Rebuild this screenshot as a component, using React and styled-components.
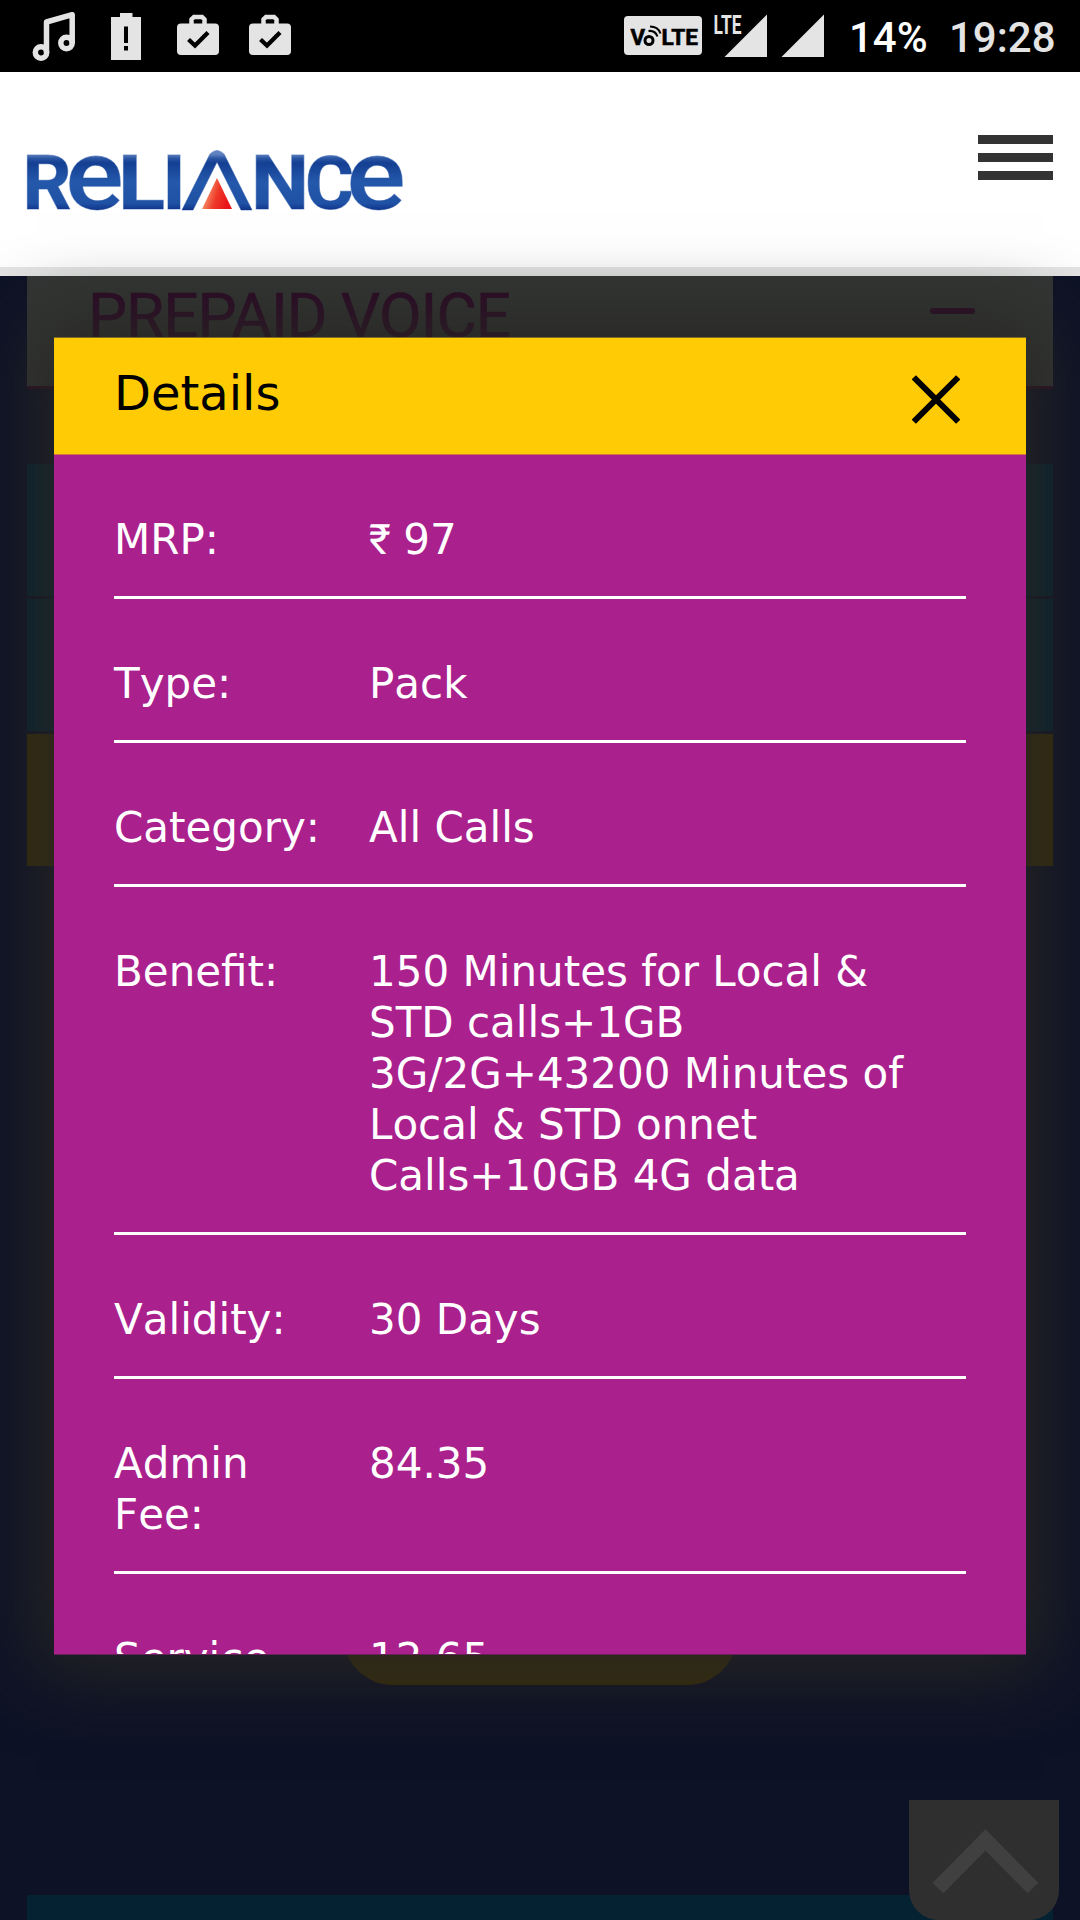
import styled, { createGlobalStyle } from "styled-components";

const details = [
  { label: "MRP:", value: "97", currency: "₹" },
  { label: "Type:", value: "Pack" },
  { label: "Category:", value: "All Calls" },
  {
    label: "Benefit:",
    value:
      "150 Minutes for Local &\nSTD calls+1GB\n3G/2G+43200 Minutes of\nLocal & STD onnet\nCalls+10GB 4G data",
  },
  { label: "Validity:", value: "30 Days" },
  { label: "Admin Fee:", value: "84.35" },
  { label: "Service Tax:", value: "12.65" },
];

const BagIcon = () => (
  <svg width="42" height="42" viewBox="0 0 42 42">
    <path
      d="M14.500 10V5.500L17 3h8l2.500 2.500V10"
      fill="none"
      stroke="#e4e4e4"
      strokeWidth="4.500"
    />
    <rect y="9.500" width="42" height="31.500" rx="4" fill="#e4e4e4" />
    <path
      d="M11.500 25.500l6.500 6 13-13"
      fill="none"
      stroke="#000"
      strokeWidth="4.300"
    />
  </svg>
);

const NotificationIcons = () => (
  <IconRow>
    <svg width="44" height="50" viewBox="0 0 44 50">
      <g fill="none" stroke="#e4e4e4" strokeWidth="5.500" strokeLinejoin="round">
        <circle cx="9" cy="40.500" r="5.700" />
        <circle cx="34.500" cy="31" r="5.700" />
        <path d="M14.500 41V10L40.200 2.700v28.500" />
      </g>
    </svg>
    <svg width="30" height="48" viewBox="0 0 30 48">
      <path d="M9 1h12.500v4H30v43H0V5h9z" fill="#e4e4e4" />
      <path d="M13 14.500h4V31h-4zM13 34h4v4.500h-4z" fill="#000" />
    </svg>
    <BagIcon />
    <BagIcon />
  </IconRow>
);

const SignalIcons = () => (
  <svg width="202" height="46" viewBox="0 0 202 46">
    <rect y="4" width="78" height="39" rx="4" fill="#e4e4e4" />
    <g
      fontFamily="Roboto, sans-serif"
      fontWeight="700"
      fontSize="22.500"
      fill="#000"
      stroke="#000"
      strokeWidth="0.6"
    >
      <text x="6.500" y="33" textLength="14.500" lengthAdjust="spacingAndGlyphs">
        V
      </text>
      <text x="37.500" y="33" textLength="36.500" lengthAdjust="spacingAndGlyphs">
        LTE
      </text>
    </g>
    <g fill="none" stroke="#000">
      <circle cx="25" cy="28.500" r="4" strokeWidth="3" />
      <path
        d="M26 14.500c5 0 9 2.500 10.500 7M24.500 19c4.500-.5 7.500 1.500 9 5.500"
        strokeWidth="2.100"
      />
    </g>
    <path d="M100.500 45H143V2.500z" fill="#e4e4e4" />
    <text
      x="89.500"
      y="21.800"
      textLength="28"
      lengthAdjust="spacingAndGlyphs"
      fontFamily="Roboto, sans-serif"
      fontWeight="700"
      fontSize="26"
      fill="#e4e4e4"
      stroke="#000"
      strokeWidth="1.500"
      paintOrder="stroke"
    >
      LTE
    </text>
    <path d="M157.500 45H200V2.500z" fill="#e4e4e4" />
  </svg>
);

const logoLetters = [
  { char: "R", x: -4.5, width: 49, size: 76, weight: 700 },
  { char: "e", x: 38.5, width: 58, size: 98, weight: 500 },
  { char: "L", x: 91, width: 47, size: 76, weight: 700 },
  { char: "I", x: 135, width: 24, size: 76, weight: 700 },
  { char: "N", x: 224, width: 58, size: 76, weight: 700 },
  { char: "C", x: 278, width: 49, size: 75, weight: 700 },
  { char: "e", x: 319.5, width: 59, size: 98, weight: 500 },
];

const Logo = () => (
  <LogoSvg width="375" height="60" viewBox="0 0 375 60">
    <defs>
      <linearGradient id="blue" x1="0" y1="4" x2="0" y2="60" gradientUnits="userSpaceOnUse">
        <stop offset="0" stopColor="#6182c0" />
        <stop offset="0.08" stopColor="#2a55a3" />
        <stop offset="0.16" stopColor="#143f93" />
        <stop offset="0.5" stopColor="#2458aa" />
        <stop offset="0.88" stopColor="#1f51a5" />
        <stop offset="1" stopColor="#0f348a" />
      </linearGradient>
      <linearGradient id="red" x1="0" y1="0" x2="1" y2="0.3">
        <stop offset="0.2" stopColor="#f79a72" />
        <stop offset="0.6" stopColor="#ee3a28" />
        <stop offset="1" stopColor="#e8131b" />
      </linearGradient>
    </defs>
    <g
      fill="url(#blue)"
      stroke="#8ea6d4"
      strokeWidth="1"
      paintOrder="stroke"
      fontFamily="Roboto, sans-serif"
    >
      {logoLetters.map(({ char, x, width, size, weight }) => (
        <text
          key={x}
          x={x}
          y="59"
          fontSize={size}
          fontWeight={weight}
          textLength={width}
          lengthAdjust="spacingAndGlyphs"
        >
          {char}
        </text>
      ))}
      <path d="M155 60L183 4Q190 -3 197 4L225 60H214L190 12L166 60z" />
    </g>
    <path d="M190 28L205 59H175z" fill="url(#red)" />
  </LogoSvg>
);

const App = () => {
  return (
    <>
      <GlobalStyle />
      <Screen>
        <StatusBar>
          <NotificationIcons />
          <SystemInfo>
            <SignalIcons />
            <Battery>14%</Battery>
            <Clock>19:28</Clock>
          </SystemInfo>
        </StatusBar>
        <Header>
          <Logo />
          <MenuButton>
            <span />
            <span />
            <span />
          </MenuButton>
        </Header>
        <Page>
          <AccordionHeader>
            <h2>PREPAID VOICE</h2>
            <Dash />
          </AccordionHeader>
          <PlanList>
            <PlanRow />
            <PlanRow />
            <PlanRow $active />
          </PlanList>
          <MoreButton />
          <NextSection />
        </Page>
        <ScrollTop>
          <svg width="150" height="120" viewBox="0 0 150 120">
            <path
              d="M29 88L76.500 40L124 88"
              fill="none"
              stroke="#404040"
              strokeWidth="15"
            />
          </svg>
        </ScrollTop>
        <Modal>
          <ModalHeader>
            <h3>Details</h3>
            <svg width="48" height="49" viewBox="0 0 48 49">
              <path
                d="M1.800 2.300l44.400 44.400M46.200 2.300l-44.400 44.400"
                stroke="#000"
                strokeWidth="6"
              />
            </svg>
          </ModalHeader>
          <ModalBody>
            {details.map(({ label, value, currency }) => (
              <DetailRow key={label}>
                <Label>{label}</Label>
                <Value>
                  {currency ? <Currency>{currency}</Currency> : null}
                  {currency ? " " : null}
                  {value}
                </Value>
              </DetailRow>
            ))}
          </ModalBody>
        </Modal>
      </Screen>
    </>
  );
};

const GlobalStyle = createGlobalStyle`
  * {
    box-sizing: border-box;
  }
  body {
    margin: 0;
    background: #0e1226;
  }
  svg {
    display: block;
    flex-shrink: 0;
  }
  h2, h3 {
    margin: 0;
    font-weight: 400;
  }
`;

const Screen = styled.div`
  position: relative;
  display: flex;
  flex-direction: column;
  width: 1080px;
  height: 1920px;
  overflow: hidden;
`;
const StatusBar = styled.div`
  display: flex;
  justify-content: space-between;
  height: 72px;
  padding: 12px 25px 0 32px;
  background: #000;
`;
const IconRow = styled.div`
  display: flex;
  gap: 30px;
  svg:nth-child(1) {
    margin-right: 5px;
  }
  svg:nth-child(2) {
    margin-right: 6px;
  }
  svg:nth-child(n + 3) {
    margin-top: 2px;
  }
`;
const SystemInfo = styled.div`
  display: flex;
  font-family: Roboto, sans-serif;
  font-size: 42px;
  font-weight: 500;
  line-height: 51px;
`;
const Battery = styled.span`
  width: 100px;
  margin-left: 23px;
  color: #fff;
`;
const Clock = styled.span`
  width: 106px;
  color: #e4e4e4;
`;

const Header = styled.header`
  display: flex;
  justify-content: space-between;
  align-items: flex-start;
  height: 204px;
  padding: 63px 27px 0;
  background: #fff;
  border-bottom: 9px solid #e5e5e5;
`;
const LogoSvg = styled.svg`
  margin-top: 15px;
  overflow: visible;
`;
const MenuButton = styled.div`
  display: flex;
  flex-direction: column;
  gap: 9px;
  width: 75px;
  span {
    height: 9px;
    background: #333;
  }
`;

const Page = styled.main`
  flex: 1;
  display: flex;
  flex-direction: column;
  padding: 0 27px;
`;
const AccordionHeader = styled.div`
  display: flex;
  justify-content: space-between;
  height: 113px;
  padding: 0 78px 0 61px;
  background: #333634;
  border-bottom: 3px solid #2b0c24;
  h2 {
    color: #2c0826;
    font-family: Roboto, sans-serif;
    font-size: 62px;
    line-height: 80px;
    letter-spacing: -1px;
    white-space: nowrap;
    -webkit-text-stroke: 0.6px #2c0826;
  }
`;
const Dash = styled.span`
  width: 45px;
  height: 6px;
  margin-top: 32px;
  border-radius: 3px;
  background: #2c0826;
`;
const PlanList = styled.div`
  display: flex;
  flex-direction: column;
  gap: 3px;
  margin-top: 75px;
`;
const PlanRow = styled.div`
  height: 132px;
  background: ${({ $active }) => ($active ? "#382c08" : "#052232")};
`;
const MoreButton = styled.div`
  align-self: center;
  width: 394px;
  height: 100px;
  margin-top: 719px;
  border-radius: 50px;
  background: #382c08;
`;
const NextSection = styled.div`
  flex: 1;
  margin-top: 210px;
  background: #052232;
`;

const ScrollTop = styled.div`
  position: absolute;
  right: 21px;
  bottom: 0;
  border-radius: 0 0 30px 30px;
  background: #2f2f2f;
`;

const Modal = styled.section`
  position: absolute;
  top: 337px;
  left: 54px;
  right: 54px;
  height: 1318px;
  display: flex;
  flex-direction: column;
  font-family: "DejaVu Sans", sans-serif;
  font-kerning: none;
  background: #aa208d;
  border-top: 1px solid #7d6a22;
  box-shadow: 0 0 72px 16px #282724;
`;
const ModalHeader = styled.div`
  display: flex;
  justify-content: space-between;
  align-items: flex-start;
  height: 117px;
  padding: 0 66px 0 60px;
  background: #ffcb05;
  border-bottom: 1px solid #d3733d;
  h3 {
    margin-top: 26px;
    font-size: 48px;
    line-height: 58px;
    color: #000;
  }
  svg {
    margin-top: 36.5px;
  }
`;
const ModalBody = styled.div`
  flex: 1;
  min-height: 0;
  overflow: hidden;
  padding: 0 60px;
  border-bottom: 1px solid #65225a;
`;
const DetailRow = styled.div`
  display: flex;
  padding: 59px 0 31px;
  border-bottom: 3px solid #fff;
  color: #fff;
  font-size: 42px;
  line-height: 51px;
`;
const Label = styled.div`
  flex: 0 0 213px;
  margin-right: 42px;
`;
const Value = styled.div`
  flex: 1;
  white-space: pre-line;
`;
const Currency = styled.span`
  display: inline-block;
  width: 21px;
  font-family: Roboto, "Noto Sans", sans-serif;
  line-height: 1;
`;

export default App;
